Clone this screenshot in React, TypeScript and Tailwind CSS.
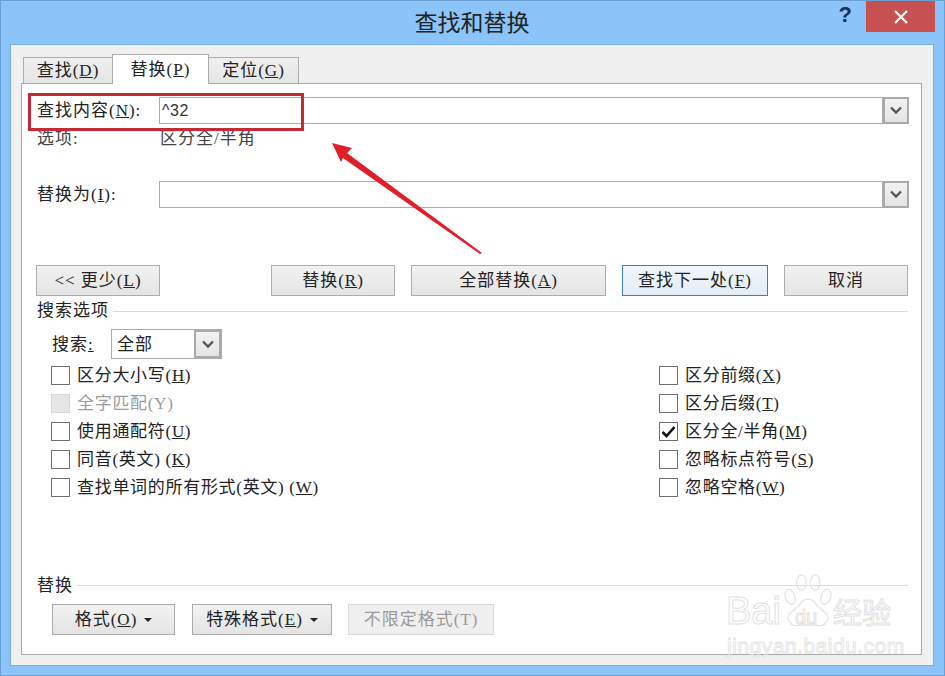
import { ReactNode } from 'react';

const FONT = 'font-["Liberation_Serif","Noto_Sans_CJK_SC",serif]';

function Btn({ children, w, variant = 'normal' }: { children: ReactNode; w: string; variant?: 'normal' | 'default' | 'disabled' }) {
  const look =
    variant === 'default'
      ? 'border-[#3c7fb1] bg-gradient-to-b from-[#f1f6fa] to-[#e3eef6] text-[#222]'
      : variant === 'disabled'
        ? 'border-[#d9d9d9] bg-[#efefef] text-[#9a9a9a]'
        : 'border-[#adadad] bg-gradient-to-b from-[#f2f2f2] to-[#e4e4e4] text-[#222]';
  return <div className={`${w} h-[31px] shrink-0 flex items-center justify-center border pt-[1px] text-[17px] tracking-[1px] ${look}`}>{children}</div>;
}

function DropBtn({ w = 'w-[26px]' }: { w?: string }) {
  return (
    <div className={`${w} self-stretch flex items-center justify-center border-2 border-[#aaaaaa] bg-gradient-to-b from-[#f2f2f2] to-[#e4e4e4]`}>
      <svg width="12" height="9" viewBox="0 0 12 9">
        <path d="M1 1.5 L6 6.5 L11 1.5" fill="none" stroke="#555" strokeWidth="2.4" />
      </svg>
    </div>
  );
}

function Check({ children, checked, disabled }: { children: ReactNode; checked?: boolean; disabled?: boolean }) {
  return (
    <div className="h-[28px] flex items-center">
      <div className={`w-[19px] h-[19px] shrink-0 flex items-center justify-center border ${disabled ? 'border-[#d8d8d8] bg-[#e6e6e6]' : 'border-[#707070] bg-white'}`}>
        {checked && (
          <svg width="15" height="13" viewBox="0 0 15 13">
            <path d="M1.5 7 L5.5 11 L13.5 2" fill="none" stroke="#111" strokeWidth="2.6" />
          </svg>
        )}
      </div>
      <span className={`ml-[7px] pt-[1px] text-[17px] tracking-[0.7px] whitespace-nowrap ${disabled ? 'text-[#9c9c9c]' : 'text-[#222]'}`}>{children}</span>
    </div>
  );
}

function GroupLabel({ children, dy }: { children: ReactNode; dy?: boolean }) {
  return (
    <div className="h-[18px] flex items-center pl-[15px] pr-[13px]">
      <span className={`text-[17px] tracking-[1px] text-[#222] whitespace-nowrap ${dy ? 'pt-[2px]' : ''}`}>{children}</span>
      <div className="flex-1 h-px bg-[#dcdcdc] ml-[4px]" />
    </div>
  );
}

function Tab({ children, active, w }: { children: ReactNode; active?: boolean; w: string }) {
  return (
    <div
      className={`${w} flex items-center justify-center border border-[#acacac] text-[17px] tracking-[1px] text-[#222] ${
        active ? 'h-[30px] bg-white border-b-0 z-10 -ml-px' : 'h-[27px] -ml-px bg-gradient-to-b from-[#f0f0f0] to-[#e5e5e5]'
      }`}
    >
      {children}
    </div>
  );
}

function Paw() {
  return (
    <svg width="50" height="54" viewBox="0 0 84 90" fill="none" stroke="#e2e2e2" strokeWidth="2">
      <ellipse cx="12" cy="38" rx="8" ry="13" transform="rotate(-20 12 38)" />
      <ellipse cx="31" cy="14" rx="8" ry="13" />
      <ellipse cx="54" cy="14" rx="8" ry="13" />
      <ellipse cx="72" cy="38" rx="8" ry="13" transform="rotate(20 72 38)" />
      <path d="M42 42 C30 42 27 56 16 62 C2 71 10 88 26 86 C35 85 49 85 58 86 C74 88 82 71 68 62 C57 56 54 42 42 42 Z" />
    </svg>
  );
}

export default function App() {
  return (
    <div className={`relative w-[945px] h-[676px] flex flex-col overflow-hidden bg-[#8ac4f8] border border-[#6a9fd2] ${FONT}`}>
      {/* Title bar */}
      <div className="h-[43px] shrink-0 grid grid-cols-[1fr_auto_1fr]">
        <div />
        <div className="flex items-center pt-[3px] pr-[1px] text-[23px] text-[#222]">查找和替换</div>
        <div className="flex items-start justify-end pr-[9px]">
          <span className="mr-[14px] mt-[-1px] font-['Liberation_Sans',sans-serif] font-bold text-[22px] text-[#1d3345] leading-[30px]">?</span>
          <div className="w-[69px] h-[31px] flex items-center justify-center bg-[#c75050]">
            <svg width="14" height="14" viewBox="0 0 14 14">
              <path d="M1 1 L13 13 M13 1 L1 13" stroke="#fff" strokeWidth="2.2" />
            </svg>
          </div>
        </div>
      </div>

      {/* Client area */}
      <div className="flex-1 ml-[9px] mr-[10px] mb-[9px] flex flex-col bg-[#f0f0f0] border border-[#7aaede] pt-[9px] pl-[10px] pr-[11px] pb-[10px]">
        <div className="flex items-end ml-[3px] -mb-px">
          <Tab w="w-[90px]">查找(<u>D</u>)</Tab>
          <Tab w="w-[97px]" active>替换(<u>P</u>)</Tab>
          <Tab w="w-[91px]">定位(<u>G</u>)</Tab>
        </div>

        <div className="flex-1 flex flex-col bg-white border border-[#a8a8a8]">
          <div className="mt-[13px] h-[27px] flex items-stretch pl-[15px] pr-[12px]">
            <span className="w-[122px] flex items-center text-[17px] tracking-[1px] text-[#222]">查找内容(<u>N</u>):</span>
            <div className="flex-1 flex items-center border border-[#ababab] pl-[2px] text-[16px] tracking-[0.5px] text-[#333] font-['Liberation_Sans',sans-serif]">^32</div>
            <DropBtn />
          </div>
          <div className="h-[28px] flex items-center pl-[15px] pt-[2px] text-[17px] tracking-[1px] text-[#444]">
            <span className="w-[123px]">选项:</span>
            <span>区分全/半角</span>
          </div>

          <div className="mt-[29px] h-[27px] flex items-stretch pl-[15px] pr-[12px]">
            <span className="w-[122px] flex items-center text-[17px] tracking-[1px] text-[#222]">替换为(<u>I</u>):</span>
            <div className="flex-1 border border-[#ababab]" />
            <DropBtn />
          </div>

          <div className="mt-[57px] flex pl-[14px]">
            <Btn w="w-[124px]">&lt;&lt; 更少(<u>L</u>)</Btn>
            <div className="ml-[111px]"><Btn w="w-[124px]">替换(<u>R</u>)</Btn></div>
            <div className="ml-[16px]"><Btn w="w-[195px]">全部替换(<u>A</u>)</Btn></div>
            <div className="ml-[16px]"><Btn w="w-[146px]" variant="default">查找下一处(<u>F</u>)</Btn></div>
            <div className="ml-[16px]"><Btn w="w-[124px]">取消</Btn></div>
          </div>

          <div className="mt-[6px]"><GroupLabel>搜索选项</GroupLabel></div>

          <div className="mt-[9px] h-[30px] flex items-stretch pl-[30px]">
            <span className="w-[59px] flex items-center pt-[1px] text-[17px] tracking-[1px] text-[#222]">搜索<u>:</u></span>
            <div className="w-[111px] flex items-stretch border border-[#ababab]">
              <span className="flex-1 flex items-center pl-[5px] pt-[1px] text-[17px] tracking-[1px] text-[#222]">全部</span>
              <DropBtn w="w-[27px]" />
            </div>
          </div>

          <div className="mt-[2px] flex pl-[29px]">
            <div className="w-[608px] flex flex-col">
              <Check>区分大小写(<u>H</u>)</Check>
              <Check disabled>全字匹配(Y)</Check>
              <Check>使用通配符(<u>U</u>)</Check>
              <Check>同音(英文) (<u>K</u>)</Check>
              <Check>查找单词的所有形式(英文) (<u>W</u>)</Check>
            </div>
            <div className="flex flex-col">
              <Check>区分前缀(<u>X</u>)</Check>
              <Check>区分后缀(<u>T</u>)</Check>
              <Check checked>区分全/半角(<u>M</u>)</Check>
              <Check>忽略标点符号(<u>S</u>)</Check>
              <Check>忽略空格(<u>W</u>)</Check>
            </div>
          </div>

          <div className="mt-[75px]"><GroupLabel dy>替换</GroupLabel></div>

          <div className="mt-[10px] flex items-end pl-[30px]">
            <Btn w="w-[123px]">
              格式(<u>O</u>)<span className="ml-[7px] w-0 h-0 border-x-[4px] border-x-transparent border-t-[4px] border-t-[#222]" />
            </Btn>
            <div className="ml-[17px]">
              <Btn w="w-[140px]">
                特殊格式(<u>E</u>)<span className="ml-[7px] w-0 h-0 border-x-[4px] border-x-transparent border-t-[4px] border-t-[#222]" />
              </Btn>
            </div>
            <div className="ml-[16px]"><Btn w="w-[146px]" variant="disabled">不限定格式(T)</Btn></div>
          </div>
        </div>
      </div>

      {/* Annotation: red box around the find field */}
      <div className="absolute left-[27px] top-[92px] w-[276px] h-[38px] border-[3px] border-[#c42b36]" />

      {/* Annotation: arrow */}
      <svg className="absolute left-[-1px] top-[-1px] pointer-events-none" width="945" height="676">
        <polygon points="332,143 352,148 347,153 482,253 480,254 343,158 341,162" fill="#e01f28" />
      </svg>

      {/* Watermark */}
      <div className="absolute left-[725px] top-[573px] w-[180px] h-[85px] pointer-events-none">
        <div className="absolute left-[57px] top-0"><Paw /></div>
        <span className="absolute left-[0px] top-[14px] font-['Liberation_Sans',sans-serif] text-[38px] leading-[46px] text-transparent [-webkit-text-stroke:1px_#e2e2e2]">Bai</span>
        <span className="absolute left-[69px] top-[31px] font-['Liberation_Sans',sans-serif] text-[20px] leading-[24px] text-transparent [-webkit-text-stroke:1px_#e2e2e2]">du</span>
        <span className="absolute left-[107px] top-[17px] font-['Noto_Sans_CJK_SC',sans-serif] text-[29px] leading-[40px] whitespace-nowrap text-transparent [-webkit-text-stroke:1px_#e2e2e2]">经验</span>
        <span className="absolute left-[1px] top-[60px] font-['Liberation_Sans',sans-serif] text-[21px] leading-[24px] whitespace-nowrap tracking-[0.5px] text-transparent [-webkit-text-stroke:1px_#e6e6e6]">jingyan.baidu.com</span>
      </div>
    </div>
  );
}
